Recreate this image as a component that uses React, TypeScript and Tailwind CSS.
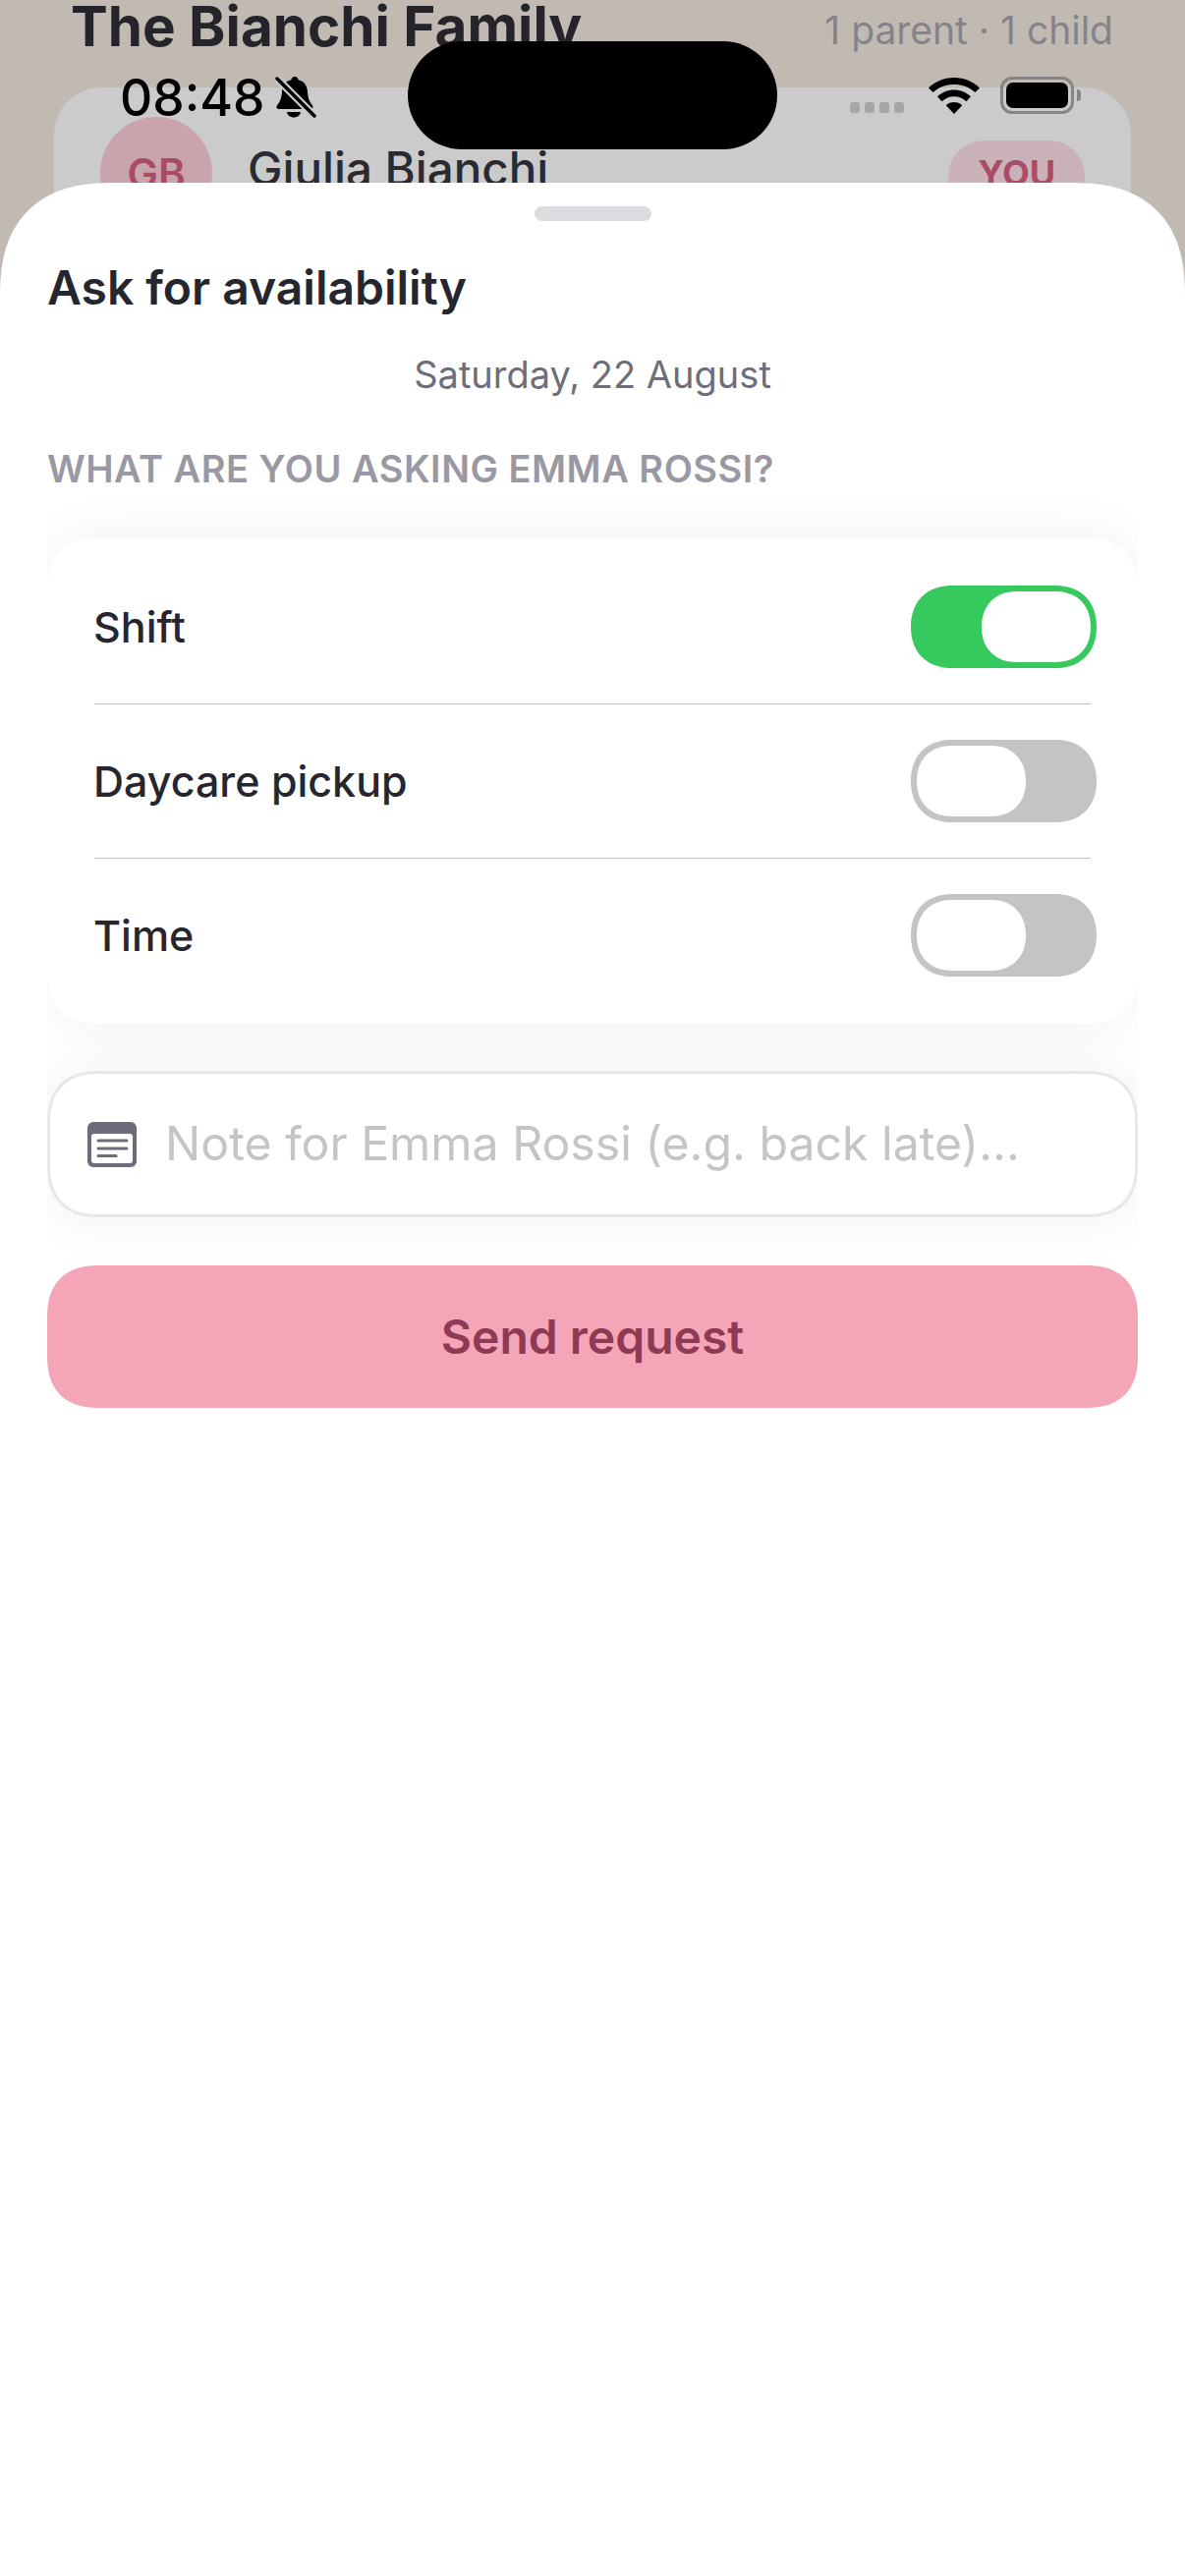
const font = "font-['Inter',sans-serif]";
const squircle = "[corner-shape:superellipse(1.3)]";

const StatusBar = () => (
  <div className="absolute inset-x-0 top-0 z-20 h-[160px]">
    <span className="absolute left-[122px] top-[70px] text-[51.5px] leading-[58px] font-medium text-black">08:48</span>
    <svg className="absolute left-[279px] top-[76px]" width="44" height="46" viewBox="0 0 44 46">
      <path d="M21 2c2 0 3.400 1.400 3.600 3.200 6 1.400 9 6 9.400 12 .3 5 1 9 5 14 1 1.400.4 3.800-2 3.800H5c-2.400 0-3-2.400-2-3.800 4-5 4.700-9 5-14 .4-6 3.400-10.600 9.400-12C17.600 3.400 19 2 21 2z" fill="#000" />
      <path d="M13 38h14c-.4 3.400-3.500 5.500-7 5.500s-6.600-2.100-7-5.500z" fill="#000" />
      <path d="M3 4l38 38" stroke="#c8c8c8" strokeWidth="8" />
      <path d="M3 4l38 38" stroke="#000" strokeWidth="3.500" strokeLinecap="round" />
    </svg>
    <div className="absolute left-[415px] top-[42px] h-[110px] w-[376px] rounded-full bg-black" />
    <div className="absolute left-[865px] top-[104px] flex gap-[5px]">
      <div className="h-[11px] w-[10px] rounded-[3px] bg-[#a6a6a6]" />
      <div className="h-[11px] w-[10px] rounded-[3px] bg-[#a6a6a6]" />
      <div className="h-[11px] w-[10px] rounded-[3px] bg-[#a6a6a6]" />
      <div className="h-[11px] w-[10px] rounded-[3px] bg-[#a6a6a6]" />
    </div>
    <svg className="absolute left-[945px] top-[79px]" width="52" height="38" viewBox="0 0 52 38">
      <path d="M26 0c10 0 19 3.800 26 10.500l-4.500 4.500C41.500 9.500 34 6.900 26 6.900S10.500 9.500 4.500 15L0 10.500C7 3.800 16 0 26 0z" fill="#000" />
      <path d="M26 12.500c6.500 0 12.500 2.500 17 6.800l-4.500 5C35.200 21.200 30.800 19.300 26 19.300s-9.200 1.900-12.500 5L9 19.300c4.500-4.300 10.500-6.800 17-6.800z" fill="#000" />
      <path d="M26 25c3.200 0 6 1.200 8.200 3.200L26 37l-8.200-8.800C20 26.200 22.800 25 26 25z" fill="#000" />
    </svg>
    <div className="absolute left-[1018px] top-[78px] flex items-center">
      <div className="flex h-[38px] w-[75px] items-center justify-center rounded-[12px] border-[3px] border-[#858585] p-[3px]">
        <div className="h-full w-full rounded-[7px] bg-black" />
      </div>
      <div className="ml-[3px] h-[12px] w-[4px] rounded-r-full bg-[#858585]" />
    </div>
  </div>
);

const Toggle = ({ on }: { on: boolean }) => (
  <div className={on ? "flex h-[84px] w-[189px] justify-end rounded-full bg-[#36c95e] p-[6px] [corner-shape:superellipse(1.15)]" : "flex h-[84px] w-[189px] justify-start rounded-full bg-[#c4c4c6] p-[6px] [corner-shape:superellipse(1.15)]"}>
    <div className="h-[72px] w-[111px] rounded-full bg-white [corner-shape:superellipse(1.15)]" />
  </div>
);

const NoteIcon = () => (
  <svg className="shrink-0" width="50" height="46" viewBox="0 0 50 46">
    <rect x="0" y="0" width="50" height="46" rx="6" fill="#6e6c7a" />
    <rect x="4" y="12" width="42" height="30" rx="3" fill="#fff" />
    <path d="M11 19h29M11 27h29" stroke="#6e6c7a" strokeWidth="3" strokeLinecap="round" />
    <path d="M11 34.500h18" stroke="#6e6c7a" strokeWidth="3" strokeLinecap="round" />
  </svg>
);

const App = () => {
  const rows = [
    { label: "Shift", on: true },
    { label: "Daycare pickup", on: false },
    { label: "Time", on: false },
  ];
  return (
    <div className={`relative h-[2622px] w-[1206px] overflow-hidden bg-[#c1bab3] ${font}`}>
      <StatusBar />

      <div className="px-[55px]">
        <div className="-mt-[8px] flex items-center justify-between pr-[18px] pl-[17px]">
          <h1 className="text-[56.6px] leading-[70px] font-bold text-[#24242a]">The Bianchi Family</h1>
          <span className="pt-[8px] text-[39px] text-[#85838a]">1 parent · 1 child</span>
        </div>
        <div className="mt-[27px] flex h-[300px] items-start justify-between rounded-t-[48px] bg-[#cbcbcb] px-[47px] pt-[30px]">
          <div className="flex items-center gap-[36px]">
            <div className="flex h-[114px] w-[114px] items-center justify-center rounded-full bg-[#c9a4ad] text-[42px] font-semibold text-[#a84c67]">GB</div>
            <span className="-mt-[8px] text-[47.5px] font-medium text-[#2a2a30]">Giulia Bianchi</span>
          </div>
          <div className="mt-[24px] rounded-[36px] bg-[#cbb2b9] px-[30px] pt-[6px] pb-[22px] text-[36px] font-bold text-[#a84c67]">YOU</div>
        </div>
      </div>

      <div className={`absolute inset-x-0 top-[186px] bottom-0 z-10 rounded-t-[116px] bg-white ${squircle}`}>
        <div className="flex justify-center pt-[24px]">
          <div className="h-[15px] w-[119px] rounded-full bg-[#dcdce0]" />
        </div>
        <h2 className="mt-[35px] px-[48px] text-[48px] leading-[66px] font-semibold text-[#26262e]">Ask for availability</h2>
        <p className="mt-[30px] text-center text-[38px] leading-[50px] text-[#6e6e7a]">Saturday, 22 August</p>
        <div className="mx-[48px] mt-[16px] overflow-hidden pb-[40px]">
          <p className="pt-[30px] text-[38px] leading-[50px] font-semibold tracking-[0.5px] text-[#9a98a3]">WHAT ARE YOU ASKING EMMA ROSSI?</p>
          <div className={`mt-[46px] rounded-[54px] bg-white py-[12px] shadow-[0_0_60px_rgba(0,0,0,0.06)] ${squircle}`}>
            {rows.map((row, index) => (
              <div key={row.label}>
                <div className="flex h-[156px] items-center justify-between pr-[42px] pl-[47px]">
                  <span className="text-[43px] font-[450] text-[#26262e]">{row.label}</span>
                  <Toggle on={row.on} />
                </div>
                {index < rows.length - 1 && <div className="mr-[48px] ml-[48px] h-px bg-[#c0c0c3]" />}
              </div>
            ))}
          </div>
          <div className={`mt-[48px] flex h-[149px] items-center gap-[29px] rounded-[54px] border-[3px] border-[#e8e8ea] bg-white pl-[38px] shadow-[0_0_60px_rgba(0,0,0,0.06)] ${squircle}`}>
            <NoteIcon />
            <span className="text-[48.2px] text-[#c5c5c7]">Note for Emma Rossi (e.g. back late)...</span>
          </div>
          <div className={`mt-[49px] flex h-[145px] items-center justify-center rounded-[54px] bg-[#f4a5b8] text-[48px] font-semibold text-[#8f3a55] ${squircle}`}>Send request</div>
        </div>
      </div>
    </div>
  );
};

export default App;
